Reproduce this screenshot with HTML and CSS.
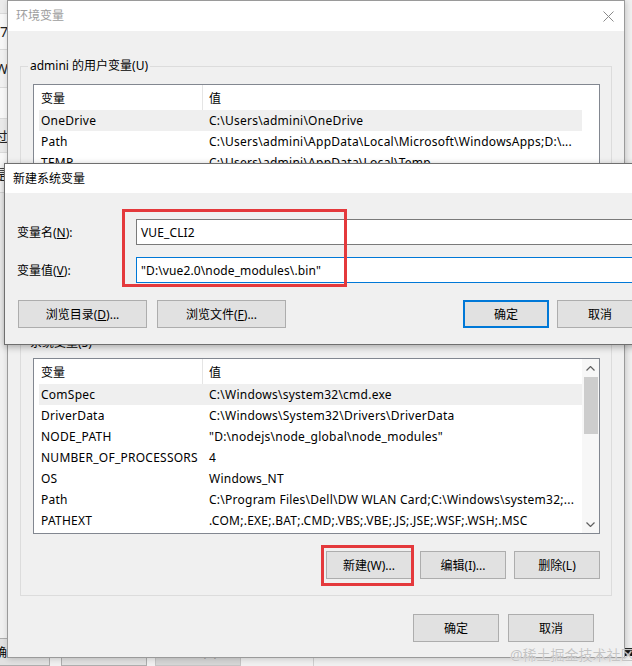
FILE: index.html
```html
<!DOCTYPE html>
<html lang="zh-CN">
<head>
<meta charset="utf-8">
<title>环境变量</title>
<link rel="stylesheet" href="styles.css">
</head>
<body>
<div class="desk">
  <div class="backwin">
    <div class="bw-side">
      <div class="bw-band b1"></div>
      <div class="bw-band b2"><span>7</span></div>
      <div class="bw-band b3"><span>W</span></div>
      <div class="bw-band b4"></div>
      <div class="bw-band b5"><span>过</span></div>
      <div class="bw-band b6"><span>是</span></div>
      <div class="bw-band b7"></div>
    </div>
    <div class="bw-bottom">
      <div class="bw-btn">确定</div>
      <div class="bw-btn">取消</div>
      <div class="bw-btn off">应用(A)</div>
      <div class="bw-panel"></div>
      <div class="bw-bar"></div>
    </div>
  </div>

  <section class="win main">
    <header class="titlebar">
      <span class="title inactive">环境变量</span>
      <svg class="close" width="11" height="11" viewBox="0 0 11 11"><path d="M0.5 0.5L10.5 10.5M10.5 0.5L0.5 10.5"/></svg>
    </header>
    <div class="main-body">
      <div class="group user">
        <div class="legend">admini 的用户变量(U)</div>
        <div class="list">
          <div class="list-main">
            <div class="lhead"><div class="c1">变量</div><div class="c2">值</div></div>
            <div class="lrow sel"><div class="c1">OneDrive</div><div class="c2">C:\Users\admini\OneDrive</div></div>
            <div class="lrow"><div class="c1">Path</div><div class="c2">C:\Users\admini\AppData\Local\Microsoft\WindowsApps;D:\...</div></div>
            <div class="lrow"><div class="c1">TEMP</div><div class="c2">C:\Users\admini\AppData\Local\Temp</div></div>
            <div class="lrow"><div class="c1">TMP</div><div class="c2">C:\Users\admini\AppData\Local\Temp</div></div>
          </div>
          <div class="scroll blank"></div>
        </div>
        <div class="btnrow">
          <button class="btn">新建(N)...</button>
          <button class="btn">编辑(E)...</button>
          <button class="btn">删除(D)</button>
        </div>
      </div>

      <div class="group sys">
        <div class="legend">系统变量(S)</div>
        <div class="list">
          <div class="list-main">
            <div class="lhead"><div class="c1">变量</div><div class="c2">值</div></div>
            <div class="lrow sel"><div class="c1">ComSpec</div><div class="c2">C:\Windows\system32\cmd.exe</div></div>
            <div class="lrow"><div class="c1">DriverData</div><div class="c2">C:\Windows\System32\Drivers\DriverData</div></div>
            <div class="lrow"><div class="c1">NODE_PATH</div><div class="c2">"D:\nodejs\node_global\node_modules"</div></div>
            <div class="lrow"><div class="c1">NUMBER_OF_PROCESSORS</div><div class="c2">4</div></div>
            <div class="lrow"><div class="c1">OS</div><div class="c2">Windows_NT</div></div>
            <div class="lrow"><div class="c1">Path</div><div class="c2">C:\Program Files\Dell\DW WLAN Card;C:\Windows\system32;...</div></div>
            <div class="lrow"><div class="c1">PATHEXT</div><div class="c2">.COM;.EXE;.BAT;.CMD;.VBS;.VBE;.JS;.JSE;.WSF;.WSH;.MSC</div></div>
          </div>
          <div class="scroll">
            <div class="sb-btn up"><svg width="9" height="5" viewBox="0 0 9 5"><path d="M0.5 4.5L4.5 0.5L8.5 4.5"/></svg></div>
            <div class="sb-thumb"></div>
            <div class="sb-track"></div>
            <div class="sb-btn down"><svg width="9" height="5" viewBox="0 0 9 5"><path d="M0.5 0.5L4.5 4.5L8.5 0.5"/></svg></div>
          </div>
        </div>
        <div class="btnrow">
          <button class="btn">新建(W)...</button>
          <button class="btn">编辑(I)...</button>
          <button class="btn">删除(L)</button>
        </div>
      </div>

      <div class="footer">
        <button class="btn">确定</button>
        <button class="btn">取消</button>
      </div>
    </div>
  </section>

  <section class="win dlg">
    <header class="titlebar dlg-title">
      <span class="title">新建系统变量</span>
    </header>
    <div class="dlg-body">
      <div class="field">
        <label class="flabel">变量名(<u>N</u>):</label>
        <div class="input">VUE_CLI2</div>
      </div>
      <div class="field">
        <label class="flabel">变量值(<u>V</u>):</label>
        <div class="input focus">"D:\vue2.0\node_modules\.bin"</div>
      </div>
      <div class="dlg-btns">
        <div class="lgroup">
          <button class="btn wide">浏览目录(<u>D</u>)...</button>
          <button class="btn wide">浏览文件(<u>F</u>)...</button>
        </div>
        <div class="rgroup">
          <button class="btn default">确定</button>
          <button class="btn">取消</button>
        </div>
      </div>
    </div>
  </section>

  <div class="mark mark-fields"></div>
  <div class="mark mark-new"></div>
  <div class="watermark">@稀土掘金技术社区</div>
</div>
</body>
</html>
```

FILE: styles.css
```css
* { box-sizing: border-box; }
html, body { margin: 0; padding: 0; }
body {
  width: 632px;
  height: 666px;
  overflow: hidden;
  font-family: "Noto Sans", "Noto Sans CJK SC", sans-serif;
  font-size: 12px;
  color: #000;
}
.desk {
  position: relative;
  width: 632px;
  height: 666px;
  overflow: hidden;
  background: #f0f0f0;
}

/* background window */
.backwin {
  position: absolute;
  inset: 0;
  background: #f0f0f0;
  display: flex;
  flex-direction: column;
}
.bw-side {
  height: 650px;
  width: 8px;
  display: flex;
  flex-direction: column;
}
.bw-band {
  display: flex;
  justify-content: flex-end;
  align-items: center;
  white-space: nowrap;
  border-bottom: 1px solid #d9d9d9;
  font-size: 14px;
  color: #222;
}
.b1 { height: 14px; background: #ebebeb; }
.b2 { height: 36px; background: #f7f7f7; }
.b3 { height: 38px; background: #f0f0f0; }
.b4 { height: 31px; background: #f7f7f7; }
.b5 { height: 34px; background: #e9e9e9; }
.b6 { height: 40px; background: #f7f7f7; }
.b7 { flex: 1; background: #f0f0f0; border-bottom: 0; }
.bw-bottom {
  display: flex;
  align-items: flex-start;
  margin-left: -36px;
  height: 28px;
}
.bw-btn {
  width: 86px;
  height: 28px;
  flex: none;
  border: 1px solid #adadad;
  background: #e1e1e1;
  display: flex;
  align-items: center;
  justify-content: center;
  margin-right: 11px;
}
.bw-btn:nth-child(2) { margin-right: 8px; }
.bw-btn.off { color: #9a9a9a; background: #d6d6d6; border-color: #c4c4c4; margin-right: 7px; }
.bw-panel { width: 66px; height: 28px; border-right: 1px solid #cfcfcf; }
.bw-bar { margin-left: auto; margin-top: 10px; width: 58px; height: 8px; background: #111; }

/* windows */
.win {
  position: absolute;
  background: #f0f0f0;
  border: 1px solid #9a9a9a;
}
.main {
  left: 7px;
  top: 0;
  width: 618px;
  height: 658px;
  box-shadow: 1px 1px 6px rgba(0,0,0,0.18);
}
.titlebar {
  height: 30px;
  background: #fff;
  display: flex;
  align-items: center;
  justify-content: space-between;
  padding: 0 10px 0 8px;
}
.title { font-size: 12px; line-height: 16px; }
.title.inactive { color: #9d9d9d; }
.close path { stroke: #8a8a8a; stroke-width: 1; fill: none; }

.main-body {
  padding: 35px 12px 0 12px;
}
.group {
  position: relative;
  border: 1px solid #dcdcdc;
  padding: 17px 11px 16px 12px;
}
.group.sys { margin-top: 21px; padding-top: 14px; }
.legend {
  position: absolute;
  top: -9px;
  left: 7px;
  padding: 0 2px;
  background: #f0f0f0;
  line-height: 16px;
  white-space: nowrap;
}
.list {
  height: 176px;
  border: 1px solid #828790;
  background: #fff;
  display: flex;
  overflow: hidden;
}
.list-main {
  flex: 1;
  padding-left: 5px;
  min-width: 0;
}
.lhead, .lrow {
  display: flex;
  white-space: nowrap;
}
.lhead { height: 25px; }
.lrow { height: 21px; align-items: center; letter-spacing: 0.25px; }
.lrow.sel { background: #efefef; }
.c1 { width: 164px; flex: none; padding-left: 2px; overflow: hidden; }
.c2 { padding-left: 6px; overflow: hidden; }
.lhead .c1 {
  border-right: 1px solid #e5e5e5;
  display: flex;
  align-items: center;
}
.lhead .c2 { display: flex; align-items: center; }

.scroll {
  width: 17px;
  flex: none;
  display: flex;
  flex-direction: column;
  background: #f7f7f7;
}
.scroll.blank { background: #fff; }
.sb-btn {
  height: 17px;
  display: flex;
  align-items: center;
  justify-content: center;
  flex: none;
}
.sb-btn.up { height: 18px; }
.sb-btn path { stroke: #606060; stroke-width: 1.2; fill: none; }
.sb-thumb {
  height: 57px;
  margin: 0 1px 0 2px;
  background: #cdcdcd;
  flex: none;
}
.sb-track { flex: 1; }

.btnrow {
  display: flex;
  justify-content: flex-end;
  gap: 8px;
  margin-top: 17px;
}
.btn {
  font: inherit;
  color: #000;
  width: 86px;
  height: 28px;
  padding: 0;
  margin: 0;
  background: #e1e1e1;
  border: 1px solid #adadad;
  border-radius: 0;
  display: flex;
  align-items: center;
  justify-content: center;
  white-space: nowrap;
  flex: none;
}
.btn.wide { width: 129px; }
.btn.default { border: 2px solid #0078d7; }
.footer {
  display: flex;
  justify-content: flex-end;
  gap: 9px;
  margin: 18px 18px 0 0;
}

/* overlay dialog */
.dlg {
  left: 4px;
  top: 163px;
  width: 653px;
  height: 182px;
  border-color: #6f6f6f;
  box-shadow: 0 2px 7px rgba(0,0,0,0.3);
}
.dlg-title { height: 29px; }
.dlg-body {
  padding: 26px 13px 0 12px;
}
.field {
  display: flex;
  align-items: center;
  height: 26px;
}
.field + .field { margin-top: 12px; }
.flabel { width: 119px; flex: none; }
.input {
  flex: 1;
  height: 26px;
  border: 1px solid #7a7a7a;
  background: #fff;
  padding-left: 4px;
  display: flex;
  align-items: center;
  white-space: nowrap;
  letter-spacing: 0.12px;
}
.input.focus { border-color: #0078d7; }
.dlg-btns {
  display: flex;
  justify-content: space-between;
  margin-top: 17px;
  padding-left: 1px;
}
.lgroup { display: flex; gap: 10px; }
.rgroup { display: flex; gap: 8px; }

/* annotations */
.mark {
  position: absolute;
  border: 3px solid #e4393c;
}
.mark-fields { left: 122px; top: 209px; width: 225px; height: 78px; }
.mark-new { left: 321px; top: 545px; width: 93px; height: 41px; }
.watermark {
  position: absolute;
  left: 510px;
  top: 646px;
  font-size: 14px;
  line-height: 17px;
  color: #c4c4c4;
  white-space: nowrap;
  text-shadow: 0 0 1px #fff;
}
```
